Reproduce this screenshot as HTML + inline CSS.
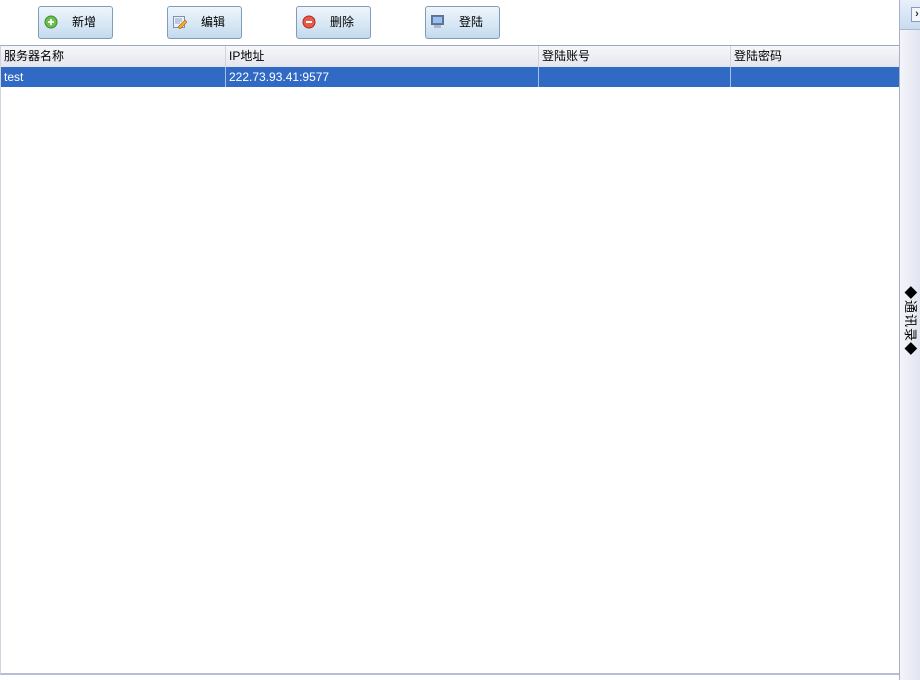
<!DOCTYPE html>
<html><head><meta charset="utf-8"><style>
body{margin:0;width:920px;height:680px;background:#fff;position:relative;overflow:hidden;font-family:"Liberation Sans","Noto Sans CJK SC",sans-serif;font-size:12px;color:#000}
.btn{position:absolute;top:6px;width:75px;height:33px;border:1px solid #7f9db9;border-radius:3px;background:linear-gradient(#eef5fb,#d6e6f4 60%,#c2d9ee);box-sizing:border-box}
.btn span{position:absolute;left:33px;top:7px;font-size:12px;line-height:16px}
.btn i{position:absolute;left:5px;top:8px;width:14px;height:14px;display:block}
.tbl{position:absolute;left:0;top:45px;width:899px;height:630px;border-top:1px solid #a0a8c0;border-bottom:2px solid #b8bcd8;border-left:1px solid #d0d4e0;box-sizing:border-box}
.hdr{position:absolute;left:0;top:0;width:898px;height:21px;background:linear-gradient(#f6f7fa,#e4e6ee);border-bottom:1px solid #c8ccd8}
.row{position:absolute;left:0;top:21px;width:898px;height:20px;background:#316ac5;color:#fff}
.c{position:absolute;top:0;height:100%;line-height:20px;padding-left:3px;box-sizing:border-box;border-right:1px solid #d0d4de}
.row .c{border-right:1px solid #a8bde8}
.side{position:absolute;left:899px;top:0;width:21px;height:680px;border-left:1px solid #a8b0c8;background:linear-gradient(90deg,#f4f5fa,#e2e4f0);box-sizing:border-box}
.sidetop{position:absolute;left:0;top:0;width:20px;height:29px;background:linear-gradient(#e8f0fa,#c8dcf0);border-bottom:1px solid #aab8d0}
.vt{position:absolute;left:2px;top:286px;writing-mode:vertical-rl;text-orientation:sideways;font-size:13px;line-height:16px;letter-spacing:1px}
.vt b{font-weight:normal;margin:0 4px}
</style></head><body>
<div class="btn" style="left:38px"><i><svg width="14" height="14"><circle cx="7" cy="7" r="6" fill="#6cbf4c" stroke="#3f8a2a"/><path d="M7 4v6M4 7h6" stroke="#fff" stroke-width="1.8"/></svg></i><span>新增</span></div>
<div class="btn" style="left:167px"><i><svg width="14" height="14"><rect x="0.5" y="1.5" width="11" height="11" fill="#eef2fa" stroke="#7f90b8"/><path d="M2 4h7M2 6h7M2 8h5" stroke="#8aa0c8"/><path d="M5 12l7-7 2 2-7 7z" fill="#f0b030" stroke="#a06810" stroke-width=".6"/></svg></i><span>编辑</span></div>
<div class="btn" style="left:296px"><i><svg width="14" height="14"><circle cx="7" cy="7" r="6" fill="#e85a4a" stroke="#b02a1a"/><path d="M4 7h6" stroke="#fff" stroke-width="2"/></svg></i><span>删除</span></div>
<div class="btn" style="left:425px"><i><svg width="14" height="14"><rect x="0.5" y="0.5" width="12" height="9" fill="#5878b0" stroke="#607090"/><rect x="2" y="2" width="9" height="6" fill="#9cc0e8"/><rect x="3" y="10" width="7" height="3" fill="#b0b8c8"/></svg></i><span>登陆</span></div>
<div class="tbl">
<div class="hdr"><div class="c" style="left:0;width:225px">服务器名称</div><div class="c" style="left:225px;width:313px">IP地址</div><div class="c" style="left:538px;width:192px">登陆账号</div><div class="c" style="left:730px;width:168px;border-right:0">登陆密码</div></div>
<div class="row"><div class="c" style="left:0;width:225px">test</div><div class="c" style="left:225px;width:313px">222.73.93.41:9577</div><div class="c" style="left:538px;width:192px"></div><div class="c" style="left:730px;width:168px;border-right:0"></div></div>
</div>
<div class="side"><div class="sidetop"><div style="position:absolute;left:11px;top:7px;width:10px;height:13px;border:1px solid #8a9ab8;background:#f4f8fc;font-size:11px;font-weight:bold;line-height:13px;text-align:center;color:#203050">›</div></div>
<div class="vt">◆<b>通讯录</b>◆</div></div>
</body></html>
